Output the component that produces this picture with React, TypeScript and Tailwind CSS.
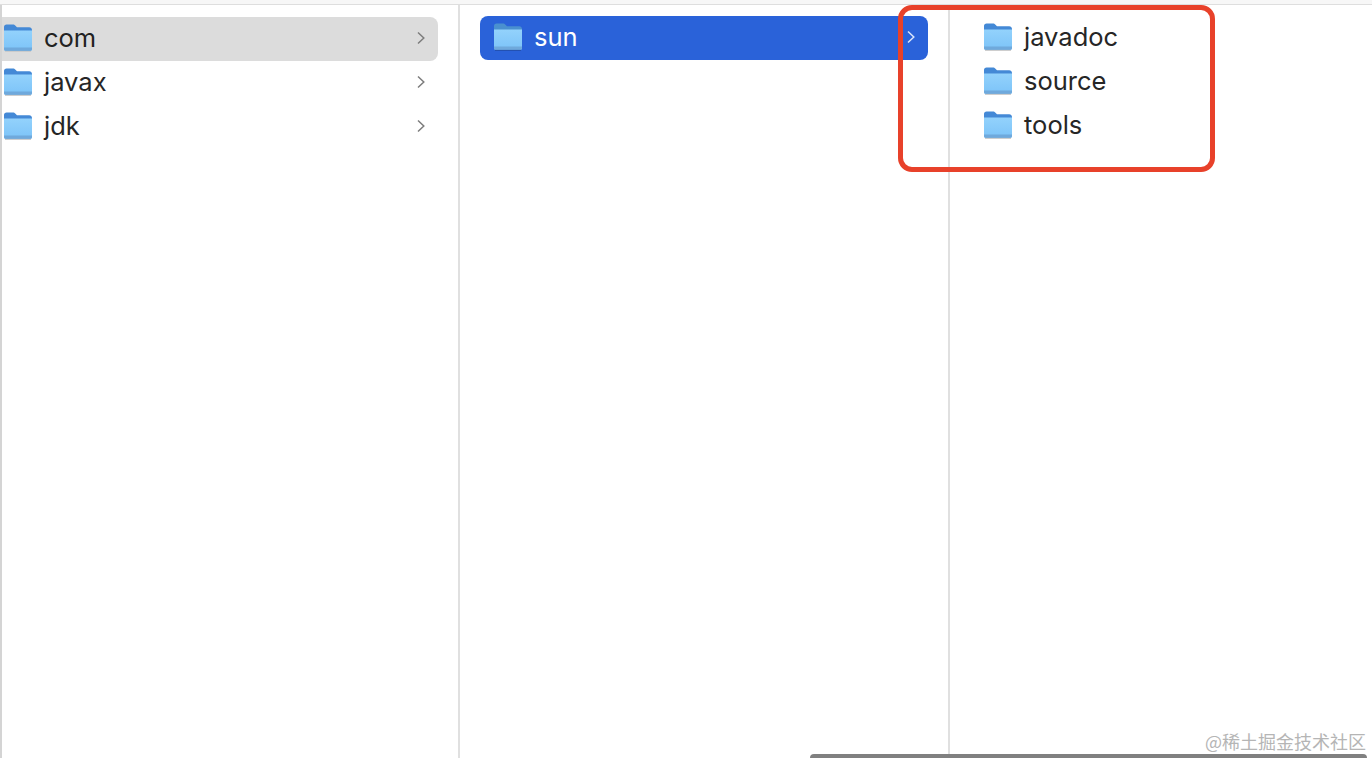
const FONT = "font-['Inter','Noto_Sans',sans-serif]";

const Folder = ({ selected = false }: { selected?: boolean }) => (
  <svg width="30" height="28" viewBox="0 0 30 28" className="shrink-0">
    <defs>
      <linearGradient id="folderFront" x1="0" y1="0" x2="0" y2="1">
        <stop offset="0" stopColor="#93d2fc" />
        <stop offset="1" stopColor="#7cc3f8" />
      </linearGradient>
    </defs>
    <path
      d="M1 3C1 1.500 2 .5 3.600 .5h6.200c1.200 0 1.900.4 2.700 1.200l1.500 1.500h12.200c1.600 0 2.800 1.200 2.800 2.800V12H1z"
      fill={selected ? "#4a90cf" : "#4489d6"}
    />
    <path
      d="M1 6.400h28V25c0 1.200-.9 2-2 2H3c-1.100 0-2-.8-2-2z"
      fill="url(#folderFront)"
    />
    <path d="M1 23.400h28V25c0 1.200-.9 2-2 2H3c-1.100 0-2-.8-2-2z" fill="#6fa9dc" />
    <path d="M2 27.400h26" stroke={selected ? "#2350ad" : "#c9c9c9"} strokeWidth="1" />
  </svg>
);

const Chevron = ({ color }: { color: string }) => (
  <svg width="10" height="14" viewBox="0 0 10 14" className="shrink-0">
    <path d="M2 1.500 7.800 7 2 12.500" fill="none" stroke={color} strokeWidth="1.500" />
  </svg>
);

const Row = ({
  name,
  tone = "plain",
  chevron = true,
}: {
  name: string;
  tone?: "plain" | "gray" | "blue";
  chevron?: boolean;
}) => {
  const bg =
    tone === "blue"
      ? "bg-[#2a62d9] text-white rounded-lg"
      : tone === "gray"
        ? "bg-[#dcdcdc] text-[#222222] rounded-r-lg"
        : "text-[#262626]";
  return (
    <div className={`flex h-11 items-center pb-[2px] ${bg}`}>
      <Folder selected={tone === "blue"} />
      <span className="ml-[11px] flex-1 text-[25.5px] leading-none">{name}</span>
      {chevron && <Chevron color={tone === "blue" ? "#d9e5fb" : "#7d7d7d"} />}
    </div>
  );
};

export default function App() {
  return (
    <div className={`relative flex h-[758px] w-[1372px] flex-col overflow-hidden bg-white ${FONT}`}>
      <div className="h-[5px] shrink-0 border-b border-[#dedede] bg-[#f7f7f7]" />

      <div className="flex min-h-0 flex-1 border-l-2 border-[#d4d4d4]">
        <section className="w-[458px] shrink-0 border-r-2 border-[#e0e0e0]">
          <div className="mt-3 w-[436px] [&>div]:pl-[1px] [&>div]:pr-[12px]">
            <Row name="com" tone="gray" />
            <Row name="javax" />
            <Row name="jdk" />
          </div>
        </section>

        <section className="w-[490px] shrink-0 border-r-2 border-[#e0e0e0] pl-5 pt-[11px]">
          <div className="w-[448px] [&>div]:pl-[13px] [&>div]:pr-[12px]">
            <Row name="sun" tone="blue" />
          </div>
        </section>

        <section className="flex-1 pl-[33px] pt-[11px]">
          <Row name="javadoc" chevron={false} />
          <Row name="source" chevron={false} />
          <Row name="tools" chevron={false} />
        </section>
      </div>

      {/* annotation drawn over the screenshot */}
      <div className="absolute left-[898px] top-[5px] h-[167px] w-[317px] rounded-[14px] border-[5px] border-[#e8412a]" />

      <span className="absolute right-[6px] top-[731px] font-['Noto_Sans_CJK_SC',sans-serif] text-[18px] leading-5 text-[#b5b5b5]">
        @稀土掘金技术社区
      </span>

      <div className="absolute left-[810px] top-[754px] h-1 w-[557px] rounded-t-md bg-[#808080]" />
    </div>
  );
}
